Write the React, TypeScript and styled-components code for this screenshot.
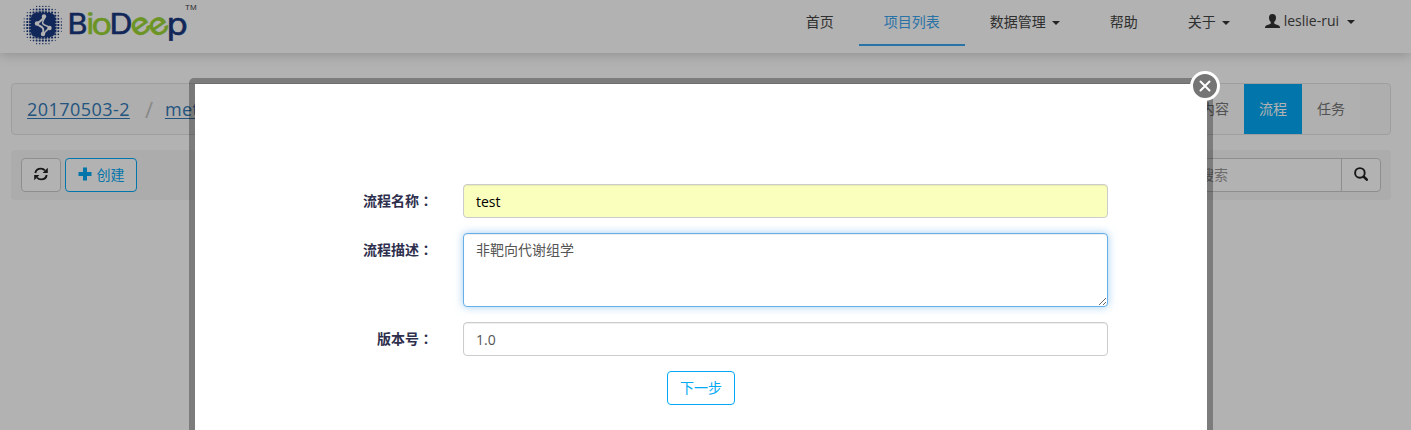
import React from 'react';
import styled, { createGlobalStyle, css } from 'styled-components';

const sans = `"Open Sans", "Noto Sans CJK SC", sans-serif`;
const accent = '#03a9f4';

const GlobalStyle = createGlobalStyle`
  *, *::before, *::after { box-sizing: border-box; }
  html, body { margin: 0; height: 100%; overflow: hidden; }
  body { background: #fff; color: #333; font: 14px/20px ${sans}; }
  input, textarea, button { font: inherit; }
`;

const Page = styled.div`
  position: relative;
  height: 430px;
  overflow: hidden;
`;

const Header = styled.header`
  display: flex;
  justify-content: space-between;
  height: 53px;
  padding: 0 46px 0 20px;
  background: #fff;
  box-shadow: 0 1px 12px rgba(0, 0, 0, 0.22);
`;

const LogoSvg = styled.svg`
  display: block;
  flex: none;
`;

const Nav = styled.nav`
  display: flex;
  align-items: flex-start;
`;

const NavItem = styled.a<{ $active?: boolean; $user?: boolean }>`
  display: flex;
  align-items: center;
  height: 46px;
  padding: ${p => (p.$user ? '0 10px' : '0 25px')};
  padding-bottom: ${p => (p.$user ? '3px' : '0')};
  border-bottom: 2px solid ${p => (p.$active ? '#3ca5f0' : 'transparent')};
  color: ${p => (p.$active ? '#3ca5f0' : '#444')};
`;

const Caret = styled.span`
  width: 0;
  height: 0;
  margin: 2px 0 0 6px;
  border: 4px solid transparent;
  border-top-color: #333;
  border-bottom: 0;
`;

const Content = styled.main`
  display: flex;
  flex-direction: column;
  gap: 15px;
  padding: 30px 20px 0 11px;
`;

const TitleBar = styled.section`
  display: flex;
  justify-content: space-between;
  height: 52px;
  border: 1px solid #e3e3e3;
  border-radius: 4px;
  background: #f9f9f9;
`;

const Crumbs = styled.div`
  display: flex;
  align-items: center;
  padding-left: 15px;
  font-size: 18px;
  color: #c4c4c4;
`;

const Crumb = styled.a`
  color: #337ab7;
  letter-spacing: 0.45px;
  text-decoration: underline;
  text-underline-offset: 2px;
  text-decoration-thickness: 1px;
`;

const Slash = styled.span`
  width: 35px;
  padding-left: 3px;
  text-align: center;
  font-size: 22px;
`;

const Tabs = styled.div`
  display: flex;
  margin-right: 30px;
`;

const Tab = styled.a<{ $active?: boolean }>`
  display: flex;
  align-items: center;
  padding: 0 15px;
  color: ${p => (p.$active ? '#fff' : '#777')};
  background: ${p => (p.$active ? accent : '#fdfdfd')};
`;

const Toolbar = styled.section`
  display: flex;
  align-items: center;
  justify-content: space-between;
  height: 50px;
  padding: 0 10px;
  border-radius: 4px;
  background: #f7f7f7;
`;

const ButtonGroup = styled.div`
  display: flex;
  gap: 4px;
`;

const Button = styled.button<{ $accent?: boolean; $width: number }>`
  display: flex;
  align-items: center;
  justify-content: center;
  gap: 5px;
  width: ${p => p.$width}px;
  height: 34px;
  padding: 0;
  border: 1px solid ${p => (p.$accent ? accent : '#ccc')};
  border-radius: 4px;
  background: #fff;
  color: ${p => (p.$accent ? accent : '#333')};
`;

const SearchGroup = styled.div`
  display: flex;
  width: 193px;
  height: 34px;
  border: 1px solid #ccc;
  border-radius: 4px;
  background: #fff;
`;

const SearchInput = styled.input`
  flex: 1;
  min-width: 0;
  padding: 0 11px;
  border: 0;
  background: transparent;
  &::placeholder { color: #999; }
`;

const SearchButton = styled.button`
  display: flex;
  align-items: center;
  justify-content: center;
  width: 39px;
  padding: 0 0 2px;
  border: 0;
  border-left: 1px solid #ccc;
  background: transparent;
`;

const Overlay = styled.div`
  position: absolute;
  inset: 0;
  background: rgba(0, 0, 0, 0.3);
`;

const Dialog = styled.div`
  position: absolute;
  left: 189px;
  top: 78px;
  width: 1024px;
  height: 500px;
  border: 6px solid rgba(0, 0, 0, 0.3);
  border-radius: 5px;
  background: #fff;
  background-clip: padding-box;
`;

const CloseButton = styled.button`
  position: absolute;
  top: -13px;
  right: -13px;
  display: flex;
  align-items: center;
  justify-content: center;
  width: 30px;
  height: 30px;
  padding: 0;
  border: 3px solid #fff;
  border-radius: 50%;
  background: #757575;
`;

const Form = styled.form`
  display: flex;
  flex-direction: column;
  gap: 15px;
  padding-top: 100px;
`;

const Field = styled.div`
  display: grid;
  grid-template-columns: 238px 645px;
  column-gap: 30px;
`;

const Label = styled.label`
  padding-top: 7px;
  text-align: right;
  font-weight: 700;
  color: #2e2f4d;
`;

const Colon = styled.span`
  font-family: "Noto Sans CJK TC", sans-serif;
  line-height: 1;
`;

const control = css`
  display: block;
  width: 100%;
  padding: 6px 12px;
  border: 1px solid #ccc;
  border-radius: 4px;
  box-shadow: inset 0 1px 1px rgba(0, 0, 0, 0.075);
  color: #555;
  outline: 0;
`;

const TextInput = styled.input<{ $filled?: boolean }>`
  ${control}
  height: 34px;
  background: ${p => (p.$filled ? '#faffbd' : '#fff')};
  color: ${p => (p.$filled ? '#000' : '#555')};
`;

const TextArea = styled.textarea`
  ${control}
  height: 74px;
  resize: vertical;
  border-color: #66afe9;
  box-shadow: inset 0 1px 1px rgba(0, 0, 0, 0.075), 0 0 8px rgba(102, 175, 233, 0.6);
`;

const Actions = styled.div`
  padding-left: 472px;
`;

function Logo() {
  const dots: React.ReactNode[] = [];
  for (let i = -6; i <= 6; i++) {
    for (let j = -6; j <= 6; j++) {
      const d = Math.hypot(i, j) * 3.1;
      if (d > 20.5 || d < 9) continue;
      const size = Math.max(0.9, Math.min(2.8, 2.8 - (d - 12) * 0.22));
      dots.push(
        <rect key={`${i},${j}`} x={22.8 + i * 3.1 - size / 2} y={25 + j * 3.1 - size / 2} width={size} height={size} rx="0.5" />,
      );
    }
  }
  return (
    <LogoSvg width="180" height="50" viewBox="0 0 180 50">
      <g fill="#1b3980">
        {dots}
        <rect x="11" y="13" width="24" height="24" rx="5" />
      </g>
      <g fill="none" stroke="#fff" strokeLinecap="round" strokeLinejoin="round">
        <path d="M23.500 17 C23 20.500 20 21 17 23.500 C18 26 22 26 23 28.500 C24 31 23 32.500 23 34" strokeWidth="2" />
        <path d="M24.500 17.500 C24 20.500 21.500 22 23 24 C24.500 26 28 25.500 29.500 27.500 C28 30 25 31 24 34" strokeWidth="1.5" />
      </g>
      <g fill="#fff">
        <circle cx="24" cy="16.500" r="2.200" />
        <circle cx="17" cy="23.500" r="2.200" />
        <circle cx="29.500" cy="28" r="2.200" />
        <circle cx="23" cy="34" r="2.200" />
      </g>
      <g fontFamily="Inter, sans-serif" fontSize="28">
        <g fill="#1b3980" stroke="#1b3980" strokeWidth="0.6">
          <text x="47.500" y="34" textLength="20" lengthAdjust="spacingAndGlyphs">B</text>
          <text x="89.500" y="34" textLength="23" lengthAdjust="spacingAndGlyphs">D</text>
          <text x="146.800" y="34.500" fontSize="30" textLength="21" lengthAdjust="spacingAndGlyphs">p</text>
        </g>
        <g fill="#9bd535" stroke="#9bd535" strokeWidth="0.6">
          <text x="66.500" y="34" textLength="7.500" lengthAdjust="spacingAndGlyphs">i</text>
          <text x="71.500" y="34.500" fontSize="30" textLength="20.500" lengthAdjust="spacingAndGlyphs">o</text>
          <text x="110.500" y="34.500" fontSize="30" textLength="20" lengthAdjust="spacingAndGlyphs" transform="rotate(-35 120.5 26.2)">e</text>
          <text x="128.500" y="34.500" fontSize="30" textLength="20" lengthAdjust="spacingAndGlyphs" transform="rotate(-35 138.5 26.2)">e</text>
        </g>
      </g>
      <text x="165" y="10" fontFamily="Liberation Sans, sans-serif" fontSize="8" fill="#444">TM</text>
    </LogoSvg>
  );
}

const UserIcon = () => (
  <svg width="15" height="14" viewBox="0 0 15 14" fill="#333">
    <path d="M7.5 0C5.3 0 4 1.4 4 3.6c0 1.9.7 3.6 1.8 4.5v1.3C4.4 10.300 1.700 10.900.8 11.700.3 12.200 0 12.800 0 14h15c0-1.200-.3-1.800-.8-2.300-.9-.8-3.600-1.400-5-2.300V8.100C10.300 7.200 11 5.500 11 3.600 11 1.400 9.700 0 7.500 0z" />
  </svg>
);

const RefreshIcon = () => (
  <svg width="14" height="14" viewBox="0 0 14 14" transform="translate(0 -1)">
    <g fill="none" stroke="#222" strokeWidth="1.9">
      <path d="M1.300 6C1.800 3.300 4.200 1.600 6.900 1.600c1.700 0 3.100.7 4.100 1.900" />
      <path d="M12.700 8c-.5 2.700-2.900 4.400-5.600 4.400-1.700 0-3.100-.7-4.100-1.900" />
    </g>
    <path d="M13.800.8v5.200H8.600zM.2 13.200V8h5.200z" fill="#222" />
  </svg>
);

const PlusIcon = () => (
  <svg width="14" height="14" viewBox="0 0 14 14" fill={accent} transform="translate(0 -1)">
    <path d="M5 .5h4V5h4.500v4H9v4.500H5V9H.5V5H5z" />
  </svg>
);

const SearchIcon = () => (
  <svg width="14" height="14" viewBox="0 0 14 14" fill="none" stroke="#222">
    <circle cx="5.900" cy="5.900" r="4.800" strokeWidth="1.900" />
    <path d="M9.500 9.500l3.300 3.200" strokeWidth="2.500" strokeLinecap="round" />
  </svg>
);

const UserName = styled.span`
  margin: 0 2px 0 4px;
`;

export default function App() {
  return (
    <Page>
      <GlobalStyle />
      <Header>
        <Logo />
        <Nav>
          <NavItem>首页</NavItem>
          <NavItem $active>项目列表</NavItem>
          <NavItem>数据管理<Caret /></NavItem>
          <NavItem>帮助</NavItem>
          <NavItem>关于<Caret /></NavItem>
          <NavItem $user><UserIcon /><UserName>leslie-rui</UserName><Caret /></NavItem>
        </Nav>
      </Header>
      <Content>
        <TitleBar>
          <Crumbs>
            <Crumb>20170503-2</Crumb>
            <Slash>/</Slash>
            <Crumb>met</Crumb>
          </Crumbs>
          <Tabs>
            <Tab>内容</Tab>
            <Tab $active>流程</Tab>
            <Tab>任务</Tab>
          </Tabs>
        </TitleBar>
        <Toolbar>
          <ButtonGroup>
            <Button $width={40}><RefreshIcon /></Button>
            <Button $width={72} $accent><PlusIcon />创建</Button>
          </ButtonGroup>
          <SearchGroup>
            <SearchInput placeholder="搜索" />
            <SearchButton><SearchIcon /></SearchButton>
          </SearchGroup>
        </Toolbar>
      </Content>
      <Overlay />
      <Dialog>
        <CloseButton type="button">
          <svg width="12" height="12" viewBox="0 0 12 12" stroke="#fff" strokeWidth="2" strokeLinecap="round">
            <path d="M1.500 1.500l9 9M10.500 1.500l-9 9" />
          </svg>
        </CloseButton>
        <Form>
          <Field>
            <Label>流程名称<Colon>：</Colon></Label>
            <TextInput $filled defaultValue="test" />
          </Field>
          <Field>
            <Label>流程描述<Colon>：</Colon></Label>
            <TextArea defaultValue="非靶向代谢组学" />
          </Field>
          <Field>
            <Label>版本号<Colon>：</Colon></Label>
            <TextInput defaultValue="1.0" />
          </Field>
          <Actions>
            <Button type="button" $width={68} $accent>下一步</Button>
          </Actions>
        </Form>
      </Dialog>
    </Page>
  );
}
